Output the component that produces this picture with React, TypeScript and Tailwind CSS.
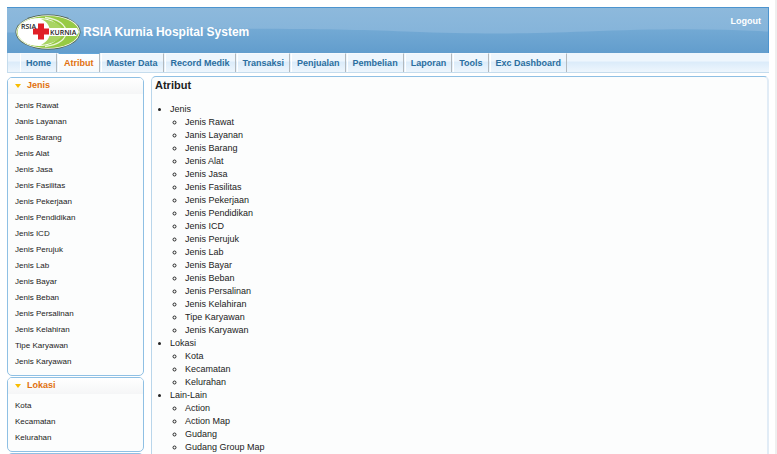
import React, { useState } from 'react';

interface MenuGroup {
  title: string;
  items: string[];
}

const tabs = [
  'Home',
  'Atribut',
  'Master Data',
  'Record Medik',
  'Transaksi',
  'Penjualan',
  'Pembelian',
  'Laporan',
  'Tools',
  'Exc Dashboard',
];

const groups: MenuGroup[] = [
  {
    title: 'Jenis',
    items: [
      'Jenis Rawat',
      'Janis Layanan',
      'Jenis Barang',
      'Jenis Alat',
      'Jenis Jasa',
      'Jenis Fasilitas',
      'Jenis Pekerjaan',
      'Jenis Pendidikan',
      'Jenis ICD',
      'Jenis Perujuk',
      'Jenis Lab',
      'Jenis Bayar',
      'Jenis Beban',
      'Jenis Persalinan',
      'Jenis Kelahiran',
      'Tipe Karyawan',
      'Jenis Karyawan',
    ],
  },
  { title: 'Lokasi', items: ['Kota', 'Kecamatan', 'Kelurahan'] },
  { title: 'Lain-Lain', items: ['Action', 'Action Map', 'Gudang', 'Gudang Group Map'] },
];

const Logo: React.FC = () => (
  <svg viewBox="0 0 66 36" className="h-9 w-[66px] shrink-0" role="img" aria-label="RSIA Kurnia">
    <defs>
      <clipPath id="logo-oval">
        <ellipse cx="33" cy="18" rx="31" ry="16" />
      </clipPath>
    </defs>
    <ellipse cx="33" cy="18" rx="32.5" ry="17.5" fill="#4b5b3c" />
    <ellipse cx="33" cy="18" rx="31.8" ry="16.8" fill="#f6faf0" />
    <g clipPath="url(#logo-oval)">
      <rect width="66" height="36" fill="#97ca45" />
      <ellipse cx="24" cy="18" rx="21.5" ry="14" fill="#fff" />
      <path d="M26 5 C38 6 48 11 48 18 C48 25 38 30 26 31 C33 27 35 23 35 18 C35 13 33 8 26 5 Z" fill="#a9d463" />
      <path d="M30 3.5 C44 5 51 11 51 18 C51 25 44 31 30 32.5" fill="none" stroke="#eaf5d8" strokeWidth="1.3" />
      <path d="M33 14 H62 L64 18 L61 22 H33 Z" fill="#fff" />
    </g>
    <path d="M23 9.5 h6 v5 h5 v6 h-5 v5 h-6 v-5 h-5 v-6 h5 Z" fill="#e01f26" />
    <text x="6" y="14.5" fontSize="7" fill="#222" fontFamily="Open Sans, sans-serif" fontWeight="600">RSIA</text>
    <text x="35" y="20.5" fontSize="7" fill="#222" fontFamily="Open Sans, sans-serif" fontWeight="600">KURNIA</text>
  </svg>
);

const Header: React.FC = () => (
  <header className="relative flex h-[46px] items-start justify-between border-t border-r border-[#4c94cf] bg-linear-to-b from-[#8db9dc] to-[#7fb0d8] pl-2">
    <svg
      viewBox="0 0 762 44"
      preserveAspectRatio="none"
      className="absolute inset-0 h-full w-full"
      aria-hidden="true"
    >
      <defs>
        <linearGradient id="wave" x1="0" y1="0" x2="0" y2="1">
          <stop offset="0" stopColor="#73a9d4" />
          <stop offset="1" stopColor="#629dcd" />
        </linearGradient>
      </defs>
      <path
        d="M0 24 C70 24 120 21 190 20.5 C300 20 340 21 400 23 C480 26 520 25 580 23 C650 20 710 20 762 23 V44 H0 Z"
        fill="url(#wave)"
      />
    </svg>
    <div className="relative flex items-center gap-[2px] pt-[6px]">
      <Logo />
      <h1 className="text-[12px] leading-4 font-bold text-white">RSIA Kurnia Hospital System</h1>
    </div>
    <a href="#logout" className="relative px-[7px] pt-[7px] text-[9px] leading-3 font-bold text-white">
      Logout
    </a>
  </header>
);

interface TabBarProps {
  active: string;
  onSelect: (tab: string) => void;
}

const TabBar: React.FC<TabBarProps> = ({ active, onSelect }) => (
  <nav className="flex h-5 gap-px border-b border-l border-[#c5dced] bg-linear-to-b from-[#eef6fd] from-40% via-[#dcecfa] via-50% to-[#eef6fd] pl-3">
    {tabs.map((tab) => (
      <button
        key={tab}
        type="button"
        onClick={() => onSelect(tab)}
        className={`border-t border-r border-l border-r-[#b3b9be] px-[5px] text-[9px] leading-[18px] font-bold whitespace-nowrap ${
          tab === active
            ? 'border-t-[#62a5d8] border-l-white bg-linear-to-b from-white to-[#f6f9fb] text-[#e1700e]'
            : 'border-t-[#f6fafe] border-l-white text-[#2b6e9f]'
        }`}
      >
        {tab}
      </button>
    ))}
  </nav>
);

const SidePanel: React.FC<{ group: MenuGroup }> = ({ group }) => {
  const [open, setOpen] = useState(true);

  return (
    <section className="rounded-[5px] border border-[#8fc0e4] bg-[#fcfdfd] pb-[5px]">
      <button
        type="button"
        aria-expanded={open}
        onClick={() => setOpen(!open)}
        className="flex h-4 w-full items-center gap-[6px] rounded-t-[4px] bg-linear-to-b from-white to-[#f5f6f7] pl-[7px] text-[9px] font-bold text-[#e1700e]"
      >
        <svg viewBox="0 0 6 4" className={`h-1 w-[6px] ${open ? '' : '-rotate-90'}`} aria-hidden="true">
          <path d="M0 0 H6 L3 4 Z" fill="#f9bd01" />
        </svg>
        {group.title}
      </button>
      {open && (
        <ul className="pt-1 pl-[7px] text-[8px] leading-4 text-[#222]">
          {group.items.map((item) => (
            <li key={item}>
              <a href="#item">{item}</a>
            </li>
          ))}
        </ul>
      )}
    </section>
  );
};

const App: React.FC = () => {
  const [active, setActive] = useState('Atribut');

  return (
    <div className="flex min-h-screen flex-col border-r-2 border-[#efefef] bg-white pt-[7px] pr-[6px] pl-[7px] font-['Liberation_Sans',Arial,sans-serif]">
      <Header />
      <TabBar active={active} onSelect={setActive} />
      <div className="flex flex-1 gap-[7px] pt-[3px]">
        <aside className="flex w-[137px] shrink-0 flex-col gap-px pt-px">
          {groups.map((group) => (
            <SidePanel key={group.title} group={group} />
          ))}
        </aside>
        <main className="flex-1 rounded-[5px] border-t border-r-2 border-l border-t-[#8fc0e4] border-r-[#e1ecf6] border-l-[#b9d6eb] bg-[#fcfdfd] pl-[3px] text-[#222]">
          <h2 className="text-[11px] leading-4 font-bold">{active}</h2>
          <ul className="list-disc pt-[10px] pl-[15px] text-[9px] leading-[13px]">
            {groups.map((group) => (
              <li key={group.title}>
                {group.title}
                <ul className="list-[circle] pl-[15px]">
                  {group.items.map((item) => (
                    <li key={item}>
                      <a href="#item">{item}</a>
                    </li>
                  ))}
                </ul>
              </li>
            ))}
          </ul>
        </main>
      </div>
    </div>
  );
};

export default App;
